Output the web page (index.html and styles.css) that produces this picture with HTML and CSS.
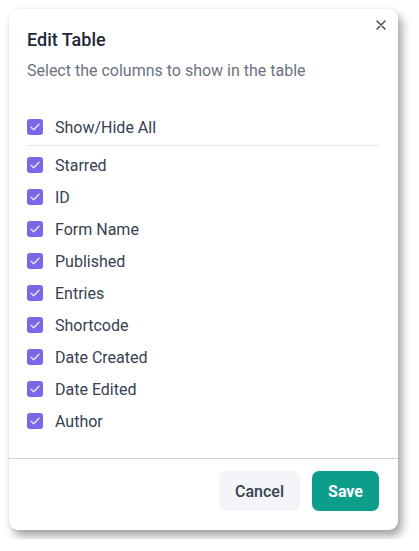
FILE: index.html
```html
<!DOCTYPE html>
<html lang="en">
<head>
<meta charset="utf-8">
<title>Edit Table</title>
<link rel="stylesheet" href="styles.css">
</head>
<body>
<div class="modal">
  <button class="close" aria-label="Close">
    <svg width="10" height="10" viewBox="0 0 10 10"><path d="M1 1L9 9M9 1L1 9" stroke="#374151" stroke-width="1.4" stroke-linecap="round"/></svg>
  </button>
  <div class="header">
    <h2 class="title">Edit Table</h2>
    <p class="subtitle">Select the columns to show in the table</p>
  </div>
  <div class="list">
    <label class="row"><span class="check"><svg width="10" height="8" viewBox="0 0 10 8"><path d="M1 4.2L3.8 6.8L9 1.2" fill="none" stroke="#fff" stroke-opacity="0.85" stroke-width="1.3" stroke-linecap="round" stroke-linejoin="round"/></svg></span><span class="label">Show/Hide All</span></label>
    <div class="divider"></div>
    <label class="row"><span class="check"><svg width="10" height="8" viewBox="0 0 10 8"><path d="M1 4.2L3.8 6.8L9 1.2" fill="none" stroke="#fff" stroke-opacity="0.85" stroke-width="1.3" stroke-linecap="round" stroke-linejoin="round"/></svg></span><span class="label">Starred</span></label>
    <label class="row"><span class="check"><svg width="10" height="8" viewBox="0 0 10 8"><path d="M1 4.2L3.8 6.8L9 1.2" fill="none" stroke="#fff" stroke-opacity="0.85" stroke-width="1.3" stroke-linecap="round" stroke-linejoin="round"/></svg></span><span class="label">ID</span></label>
    <label class="row"><span class="check"><svg width="10" height="8" viewBox="0 0 10 8"><path d="M1 4.2L3.8 6.8L9 1.2" fill="none" stroke="#fff" stroke-opacity="0.85" stroke-width="1.3" stroke-linecap="round" stroke-linejoin="round"/></svg></span><span class="label">Form Name</span></label>
    <label class="row"><span class="check"><svg width="10" height="8" viewBox="0 0 10 8"><path d="M1 4.2L3.8 6.8L9 1.2" fill="none" stroke="#fff" stroke-opacity="0.85" stroke-width="1.3" stroke-linecap="round" stroke-linejoin="round"/></svg></span><span class="label">Published</span></label>
    <label class="row"><span class="check"><svg width="10" height="8" viewBox="0 0 10 8"><path d="M1 4.2L3.8 6.8L9 1.2" fill="none" stroke="#fff" stroke-opacity="0.85" stroke-width="1.3" stroke-linecap="round" stroke-linejoin="round"/></svg></span><span class="label">Entries</span></label>
    <label class="row"><span class="check"><svg width="10" height="8" viewBox="0 0 10 8"><path d="M1 4.2L3.8 6.8L9 1.2" fill="none" stroke="#fff" stroke-opacity="0.85" stroke-width="1.3" stroke-linecap="round" stroke-linejoin="round"/></svg></span><span class="label">Shortcode</span></label>
    <label class="row"><span class="check"><svg width="10" height="8" viewBox="0 0 10 8"><path d="M1 4.2L3.8 6.8L9 1.2" fill="none" stroke="#fff" stroke-opacity="0.85" stroke-width="1.3" stroke-linecap="round" stroke-linejoin="round"/></svg></span><span class="label">Date Created</span></label>
    <label class="row"><span class="check"><svg width="10" height="8" viewBox="0 0 10 8"><path d="M1 4.2L3.8 6.8L9 1.2" fill="none" stroke="#fff" stroke-opacity="0.85" stroke-width="1.3" stroke-linecap="round" stroke-linejoin="round"/></svg></span><span class="label">Date Edited</span></label>
    <label class="row"><span class="check"><svg width="10" height="8" viewBox="0 0 10 8"><path d="M1 4.2L3.8 6.8L9 1.2" fill="none" stroke="#fff" stroke-opacity="0.85" stroke-width="1.3" stroke-linecap="round" stroke-linejoin="round"/></svg></span><span class="label">Author</span></label>
  </div>
  <div class="footer">
    <button class="btn btn-cancel">Cancel</button>
    <button class="btn btn-save">Save</button>
  </div>
</div>
</body>
</html>
```

FILE: styles.css
```css
* { box-sizing: border-box; }
html, body { margin: 0; padding: 0; background: #ffffff; }
body {
  font-family: Roboto, "Liberation Sans", sans-serif;
  padding: 9px;
}
.modal {
  position: relative;
  width: 389px;
  height: 521px;
  background: #ffffff;
  border-radius: 9px;
  box-shadow: 4px 6px 10px rgba(0, 0, 0, 0.36), 0 0 3px rgba(0, 0, 0, 0.08);
  display: flex;
  flex-direction: column;
}
.close {
  position: absolute;
  top: 11px;
  right: 12px;
  width: 10px;
  height: 10px;
  padding: 0;
  border: 0;
  background: none;
  display: flex;
}
.header {
  padding: 19px 18px 0 18px;
}
.title {
  margin: 0;
  font-size: 18px;
  line-height: 24px;
  font-weight: 500;
  color: #1f2937;
}
.subtitle {
  margin: 8px 0 0 0;
  font-size: 16px;
  line-height: 22px;
  color: #6b7280;
}
.list {
  padding: 29px 19px 21px 18px;
  flex: 1;
}
.row {
  height: 32px;
  display: flex;
  align-items: center;
  gap: 12px;
}
.check {
  width: 16px;
  height: 16px;
  border-radius: 3px;
  background: #7b68e8;
  display: flex;
  align-items: center;
  justify-content: center;
}
.label {
  font-size: 16px;
  color: #374151;
}
.divider {
  height: 1px;
  background: #e2e4e8;
  margin: 2px 0 3px 0;
}
.footer {
  border-top: 1px solid #cfd2d6;
  padding: 12px 19px 19px 19px;
  display: flex;
  justify-content: flex-end;
  gap: 12px;
}
.btn {
  height: 40px;
  border: 0;
  border-radius: 7px;
  font-family: Roboto, "Liberation Sans", sans-serif;
  font-size: 16px;
}
.btn-cancel {
  width: 81px;
  background: #f3f5f8;
  color: #374151;
  font-weight: 500;
}
.btn-save {
  width: 67px;
  background: #0c9e8b;
  color: #ffffff;
  font-weight: 700;
}
```
